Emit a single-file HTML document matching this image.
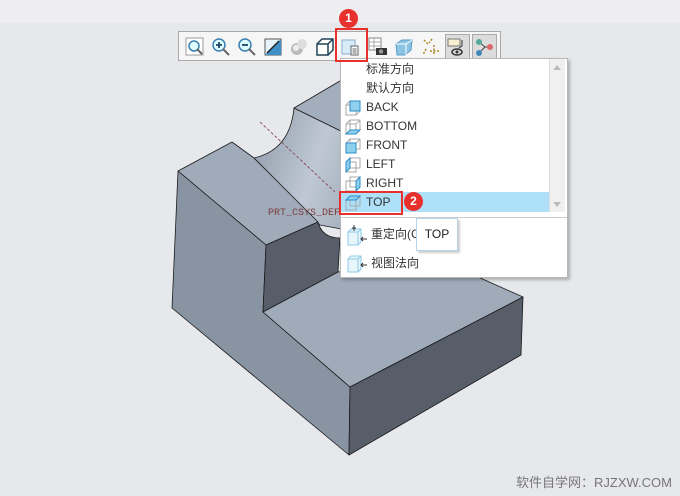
<!DOCTYPE html>
<html><head><meta charset="utf-8"><style>
*{margin:0;padding:0;box-sizing:border-box}
body{width:680px;height:496px;overflow:hidden;background:#e7e8ec;position:relative;font-family:"Liberation Sans","Noto Sans CJK SC",sans-serif}
.top{position:absolute;left:0;top:0;width:680px;height:23px;background:#eeeef0}
.tb{position:absolute;left:178px;top:31px;width:323px;height:30px;background:#f6f6f6;border:1px solid #a9a9a9}
.ic{position:absolute;top:5px;width:20px;height:20px}
.menu{position:absolute;left:340px;top:58px;width:228px;height:220px;background:#fff;border:1px solid #b8b8b8;box-shadow:2px 2px 3px rgba(0,0,0,.25)}
.it{position:absolute;left:25px;font-size:12px;color:#333;line-height:19px}
.cb{position:absolute;left:4px;width:16px;height:16px}
.red{position:absolute;border:2px solid #e8302c}
.badge{position:absolute;width:19px;height:19px;border-radius:50%;background:#e8302c;color:#fff;font-size:12px;font-weight:bold;text-align:center;line-height:19px}
</style></head><body>
<div class="top"></div>

<svg width="680" height="496" style="position:absolute;left:0;top:0">
<defs><linearGradient id="gr" x1="0" y1="0" x2="1" y2="0.3"><stop offset="0" stop-color="#8e99a8"/><stop offset="0.5" stop-color="#bfc8d4"/><stop offset="1" stop-color="#98a3b2"/></linearGradient></defs>
<g stroke="#1a1a1a" stroke-width="0.8" stroke-linejoin="round">
<!-- groove surface -->
<path d="M254,158 Q290,150 294,108 L400,160 L400,240 L320,225 Z" fill="url(#gr)"/>
<!-- back top strip -->
<path d="M294,108 L345,78 L420,120 L400,160 Z" fill="#a3aebd"/>
<!-- left top strip -->
<path d="M178,171 L232,142 L254,158 L318,222 L266,245 Z" fill="#a0abba"/>
<!-- left face -->
<path d="M178,171 L266,245 L263,312 L350,387 L349,455 L172,308 Z" fill="#8994a3"/>
<!-- front face of tall part -->
<path d="M266,245 L318,222 Q322,238 340,238 L338,272 L263,312 Z" fill="#575e69"/>
<!-- step top -->
<path d="M263,312 L338,272 L440,260 L523,297 L350,387 Z" fill="#a0abba"/>
<!-- front low -->
<path d="M350,387 L523,297 L521,355 L349,455 Z" fill="#575e69"/>
</g>
<line x1="260" y1="122" x2="335" y2="192" stroke="#7a3c3c" stroke-width="0.8" stroke-dasharray="3,2"/>
<text x="268" y="215" font-family="Liberation Mono,monospace" font-size="10" fill="#7a3c3c">PRT_CSYS_DEF</text>
</svg>

<div class="tb">
<svg class="ic" style="left:6px" viewBox="0 0 20 20"><rect x="1" y="1" width="17" height="17" fill="#fff" stroke="#999"/><circle cx="9" cy="9" r="5" fill="#dff" stroke="#3a7fb0" stroke-width="1.5"/><line x1="12" y1="12" x2="17" y2="17" stroke="#666" stroke-width="2"/></svg>
<svg class="ic" style="left:32px" viewBox="0 0 20 20"><circle cx="8" cy="8" r="6" fill="#dff" stroke="#3a7fb0" stroke-width="1.5"/><path d="M5 8h6M8 5v6" stroke="#246" stroke-width="1.8"/><line x1="12" y1="12" x2="18" y2="18" stroke="#666" stroke-width="2"/></svg>
<svg class="ic" style="left:58px" viewBox="0 0 20 20"><circle cx="8" cy="8" r="6" fill="#dff" stroke="#3a7fb0" stroke-width="1.5"/><path d="M5 8h6" stroke="#246" stroke-width="1.8"/><line x1="12" y1="12" x2="18" y2="18" stroke="#666" stroke-width="2"/></svg>
<svg class="ic" style="left:84px" viewBox="0 0 20 20"><rect x="2" y="2" width="16" height="16" fill="#e6f3fb" stroke="#555"/><path d="M2 18L18 2V18Z" fill="#3d8fc6"/><line x1="4" y1="16" x2="16" y2="4" stroke="#222" stroke-width="1.5"/></svg>
<svg class="ic" style="left:110px" viewBox="0 0 20 20"><circle cx="8" cy="12" r="6" fill="#bbb"/><circle cx="13" cy="7" r="5" fill="#ddd"/><circle cx="7" cy="11" r="3" fill="#eee"/></svg>
<svg class="ic" style="left:136px" viewBox="0 0 20 20"><path d="M2 7h11v11H2z M2 7l5-5h11v11l-5 5 M13 7l5-5" fill="#fff" stroke="#245" stroke-width="1.5"/></svg>
<svg class="ic" style="left:162px" viewBox="0 0 20 20"><rect x="1" y="3" width="13" height="14" fill="#d7ecf8" stroke="#8ac"/><rect x="10" y="9" width="7" height="9" fill="#fff" stroke="#666"/><path d="M11.5 12h4M11.5 14h4M11.5 16h4" stroke="#666"/></svg>
<svg class="ic" style="left:189px" viewBox="0 0 20 20"><rect x="1" y="1" width="12" height="12" fill="#fff" stroke="#888"/><path d="M1 5h12M1 9h12M6 1v12" stroke="#aaa"/><rect x="8" y="11" width="11" height="7" fill="#333"/><circle cx="13" cy="14.5" r="2.2" fill="#999"/></svg>
<svg class="ic" style="left:215px" viewBox="0 0 20 20"><path d="M2 7l6-4h10l-1 10-6 5H3z" fill="#8cc4e4" stroke="#5a9cc6"/><path d="M2 7h10l6-4M12 7v11" stroke="#fff" fill="none"/></svg>
<svg class="ic" style="left:242px" viewBox="0 0 20 20"><path d="M3 3l4 4M11 2l-3 4M13 8v10M9 14h9M5 12l-3 6" stroke="#b08a2a" stroke-width="1.5" stroke-dasharray="2,1.5" fill="none"/></svg>
<div style="position:absolute;left:266px;top:2px;width:25px;height:25px;background:#dcdcdc;border:1px solid #aaa"></div>
<svg class="ic" style="left:268px" viewBox="0 0 20 20"><rect x="1" y="2" width="12" height="7" fill="#f8f0d0" stroke="#777"/><path d="M15 3v6l-3 2" stroke="#333" fill="none"/><ellipse cx="10" cy="15" rx="5" ry="3" fill="none" stroke="#333" stroke-width="1.5"/><circle cx="10" cy="15" r="1.5" fill="#333"/></svg>
<div style="position:absolute;left:293px;top:2px;width:25px;height:25px;background:#dcdcdc;border:1px solid #aaa"></div>
<svg class="ic" style="left:295px" viewBox="0 0 20 20"><path d="M5 5l6 5-6 6M11 10h5" stroke="#444" fill="none"/><circle cx="5" cy="5" r="3" fill="#5a9"/><circle cx="16" cy="10" r="3" fill="#d66"/><circle cx="5" cy="16" r="3" fill="#48b"/></svg>
</div>

<div class="menu">
<div class="it" style="top:1px">标准方向</div>
<div class="it" style="top:20px">默认方向</div>
<div style="position:absolute;left:0;top:133px;width:208px;height:20px;background:#aee0fa"></div>
<svg class="cb" style="top:41px" viewBox="0 0 16 16"><path d="M1 5h10v10H1zM1 5l4-4h10v10l-4 4M11 5l4-4" fill="none" stroke="#aaa"/><path d="M5 1h10v10H5z" fill="#8fd0ef" stroke="#2b8cc4"/></svg>
<div class="it" style="top:39px">BACK</div>
<svg class="cb" style="top:60px" viewBox="0 0 16 16"><path d="M1 5h10v10H1zM5 1h10v10H5zM1 5l4-4M11 5l4-4" fill="none" stroke="#aaa"/><path d="M1 15l4-4h10l-4 4z" fill="#8fd0ef" stroke="#2b8cc4"/></svg>
<div class="it" style="top:58px">BOTTOM</div>
<svg class="cb" style="top:79px" viewBox="0 0 16 16"><path d="M5 1h10v10H5zM1 5l4-4M11 5l4-4" fill="none" stroke="#aaa"/><path d="M1 5h10v10H1z" fill="#8fd0ef" stroke="#2b8cc4"/></svg>
<div class="it" style="top:77px">FRONT</div>
<svg class="cb" style="top:98px" viewBox="0 0 16 16"><path d="M1 5h10v10H1zM5 1h10v10H5z" fill="none" stroke="#aaa"/><path d="M1 5l4-4v10l-4 4z" fill="#8fd0ef" stroke="#2b8cc4"/></svg>
<div class="it" style="top:96px">LEFT</div>
<svg class="cb" style="top:117px" viewBox="0 0 16 16"><path d="M1 5h10v10H1zM5 1h10v10H5z" fill="none" stroke="#aaa"/><path d="M11 5l4-4v10l-4 4z" fill="#8fd0ef" stroke="#2b8cc4"/></svg>
<div class="it" style="top:115px">RIGHT</div>
<svg class="cb" style="top:136px" viewBox="0 0 16 16"><path d="M1 5h10v10H1zM5 1h10v10H5z" fill="none" stroke="#aaa"/><path d="M1 5l4-4h10l-4 4z" fill="#8fd0ef" stroke="#2b8cc4"/></svg>
<div class="it" style="top:134px">TOP</div>
<div style="position:absolute;left:208px;top:0;width:16px;height:153px;background:#f0f0f0;border-left:1px solid #ddd"></div>
<div style="position:absolute;left:212px;top:6px;border:4px solid transparent;border-bottom:5px solid #bbb;border-top:0"></div>
<div style="position:absolute;left:212px;top:143px;border:4px solid transparent;border-top:5px solid #bbb;border-bottom:0"></div>
<div style="position:absolute;left:0;top:158px;width:226px;height:1px;background:#ccc"></div>
<svg style="position:absolute;left:5px;top:165px;width:22px;height:22px" viewBox="0 0 22 22"><path d="M2 8l3-3h10v13l-3 3H2z" fill="#e8f6fc" stroke="#8ccbe6"/><path d="M12 8v13M2 8h10l3-3" stroke="#8ccbe6" fill="none"/><path d="M8 1v6M6 4h4" stroke="#333"/><path d="M21 15h-6m2-2l-2 2 2 2" stroke="#333" fill="none"/></svg>
<div class="it" style="top:166px;left:30px">重定向(C</div>
<svg style="position:absolute;left:5px;top:194px;width:22px;height:22px" viewBox="0 0 22 22"><path d="M2 6l3-3h10v13l-3 3H2z" fill="#e8f6fc" stroke="#8ccbe6"/><path d="M12 6v13M2 6h10l3-3" stroke="#8ccbe6" fill="none"/><path d="M21 12h-6m2-2l-2 2 2 2" stroke="#333" fill="none"/></svg>
<div class="it" style="top:195px;left:30px">视图法向</div>
</div>

<div style="position:absolute;left:416px;top:218px;width:42px;height:33px;background:#fff;border:1px solid #b6d4ea;box-shadow:2px 2px 2px rgba(0,0,0,.2);font-size:12px;color:#222;text-align:center;line-height:30px">TOP</div>

<div class="red" style="left:335px;top:28px;width:33px;height:34px"></div>
<div class="badge" style="left:339px;top:9px">1</div>
<div class="red" style="left:339px;top:191px;width:64px;height:24px"></div>
<div class="badge" style="left:404px;top:192px">2</div>

<div style="position:absolute;left:516px;top:472px;font-size:13px;color:#777">软件自学网：RJZXW.COM</div>
</body></html>
